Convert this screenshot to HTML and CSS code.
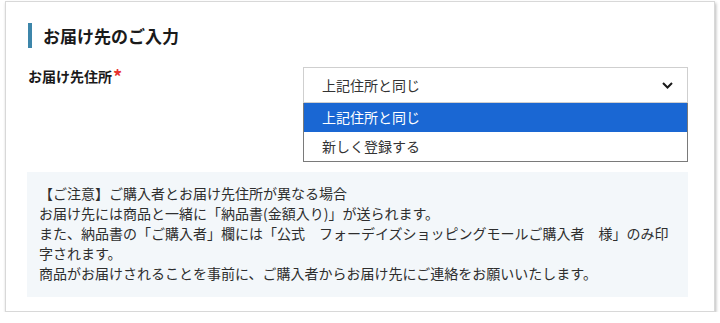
FILE: index.html
```html
<!DOCTYPE html>
<html lang="ja">
<head>
<meta charset="utf-8">
<link rel="stylesheet" href="styles.css">
</head>
<body>
<section class="card">
  <h2 class="heading">お届け先のご入力</h2>
  <div class="row">
    <div class="label">お届け先住所<span class="req">*</span></div>
    <div class="select-wrap">
      <div class="select">
        <span>上記住所と同じ</span>
        <svg class="chev" width="11" height="7" viewBox="0 0 11 7"><polyline points="1,1 5.5,5.5 10,1" fill="none" stroke="#1a1a1a" stroke-width="2"/></svg>
      </div>
      <ul class="listbox">
        <li class="opt active">上記住所と同じ</li>
        <li class="opt">新しく登録する</li>
      </ul>
    </div>
  </div>
  <div class="note">
    <p>【ご注意】ご購入者とお届け先住所が異なる場合</p>
    <p>お届け先には商品と一緒に「納品書(金額入り)」が送られます。</p>
    <p>また、納品書の「ご購入者」欄には「公式　フォーデイズショッピングモールご購入者　様」のみ印字されます。</p>
    <p>商品がお届けされることを事前に、ご購入者からお届け先にご連絡をお願いいたします。</p>
  </div>
</section>
</body>
</html>
```

FILE: styles.css
```css
html, body {
  margin: 0;
  padding: 0;
  background: #ffffff;
}
body {
  font-family: "Noto Sans CJK JP", "Noto Sans", sans-serif;
  color: #333;
  padding: 1px 5px 0 5px;
}
.card {
  width: 710px;
  height: 311px;
  box-sizing: border-box;
  border: 1px solid #d8d8d8;
  box-shadow: 1px 2px 3px rgba(0, 0, 0, 0.28);
  background: #fff;
  padding: 21px 26px 0 22px;
}
.heading {
  margin: 0;
  height: 25px;
  line-height: 25px;
  font-size: 17px;
  font-weight: bold;
  color: #1a1a1a;
  border-left: 4px solid #3d86aa;
  padding-left: 11px;
}
.row {
  display: flex;
  margin-top: 19px;
  margin-bottom: 69px;
}
.label {
  width: 275px;
  font-size: 14px;
  font-weight: bold;
  line-height: 18px;
  color: #1a1a1a;
}
.req {
  color: #e8322f;
  font-size: 18px;
  line-height: 18px;
  vertical-align: top;
  margin-left: 1px;
}
.select-wrap {
  position: relative;
  width: 385px;
}
.select {
  height: 36px;
  box-sizing: border-box;
  border: 1px solid #cfcfcf;
  display: flex;
  align-items: center;
  justify-content: space-between;
  padding: 0 14px 0 18px;
  font-size: 14px;
  color: #333;
}
.chev {
  display: block;
}
.listbox {
  position: absolute;
  top: 36px;
  left: 0;
  width: 385px;
  box-sizing: border-box;
  margin: 0;
  padding: 0;
  list-style: none;
  border: 1px solid #7a7a7a;
  border-top: none;
  background: #fff;
}
.opt {
  height: 29px;
  line-height: 29px;
  padding-left: 18px;
  font-size: 14px;
  color: #333;
}
.opt.active {
  background: #1a67d3;
  color: #fff;
}
.note {
  background: #f3f7fa;
  padding: 11px 13px 14px 12px;
  margin-left: -1px;
  font-size: 14px;
  line-height: 20px;
  color: #2e2e2e;
}
.note p {
  margin: 0;
}
```
